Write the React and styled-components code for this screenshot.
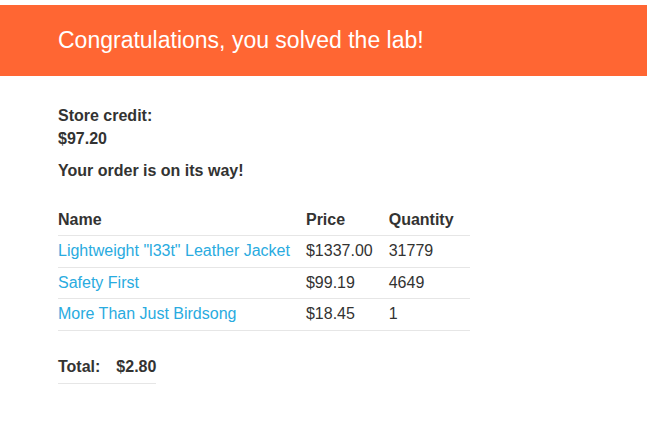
import React from "react";
import styled, { createGlobalStyle } from "styled-components";

const GlobalStyle = createGlobalStyle`
  html, body {
    margin: 0;
    padding: 0;
    background: #fff;
    font-family: "Liberation Sans", Arial, sans-serif;
    color: #333332;
    font-size: 16px;
  }
`;

const items = [
  { name: 'Lightweight "l33t" Leather Jacket', price: "$1337.00", qty: "31779" },
  { name: "Safety First", price: "$99.19", qty: "4649" },
  { name: "More Than Just Birdsong", price: "$18.45", qty: "1" },
];

const App = () => {
  return (
    <>
      <GlobalStyle />
      <Page>
        <Banner>
          <BannerTitle>Congratulations, you solved the lab!</BannerTitle>
        </Banner>
        <Content>
          <Credit>
            Store credit:
            <br />
            $97.20
          </Credit>
          <Notice>Your order is on its way!</Notice>
          <Table>
            <thead>
              <tr>
                <Th>Name</Th>
                <Th>Price</Th>
                <Th>Quantity</Th>
              </tr>
            </thead>
            <tbody>
              {items.map((item) => (
                <tr key={item.name}>
                  <Td>
                    <ItemLink href="#">{item.name}</ItemLink>
                  </Td>
                  <Td>{item.price}</Td>
                  <Td>{item.qty}</Td>
                </tr>
              ))}
            </tbody>
          </Table>
          <TotalTable>
            <tbody>
              <tr>
                <TotalCell>Total:</TotalCell>
                <TotalCell>$2.80</TotalCell>
              </tr>
            </tbody>
          </TotalTable>
        </Content>
      </Page>
    </>
  );
};

export default App;

const Page = styled.div`
  padding-top: 5px;
`;

const Banner = styled.div`
  background: #ff6633;
  height: 71px;
  display: flex;
  align-items: center;
  padding: 0 58px;
`;

const BannerTitle = styled.h4`
  margin: 0;
  color: #fff;
  font-weight: normal;
  font-size: 23px;
`;

const Content = styled.div`
  padding: 28px 58px 0;
`;

const Credit = styled.p`
  margin: 0;
  font-weight: bold;
  line-height: 23px;
`;

const Notice = styled.p`
  margin: 9px 0 0;
  font-weight: bold;
  line-height: 23px;
`;

const Table = styled.table`
  border-collapse: collapse;
  margin-top: 22px;
`;

const Th = styled.th`
  text-align: left;
  font-weight: bold;
  padding: 6px 16px 5px 0;
  line-height: 20px;
  border-bottom: 1px solid #e6e6e6;
`;

const Td = styled.td`
  padding: 5px 16px 5px 0;
  line-height: 20.5px;
  border-bottom: 1px solid #e6e6e6;
`;

const ItemLink = styled.a`
  color: #29abe0;
  text-decoration: none;
`;

const TotalTable = styled.table`
  border-collapse: collapse;
  margin-top: 20px;
`;

const TotalCell = styled.th`
  text-align: left;
  font-weight: bold;
  padding: 5px 16px 6px 0;
  line-height: 21px;
  border-bottom: 1px solid #e6e6e6;
  &:last-child {
    padding-right: 0;
  }
`;
